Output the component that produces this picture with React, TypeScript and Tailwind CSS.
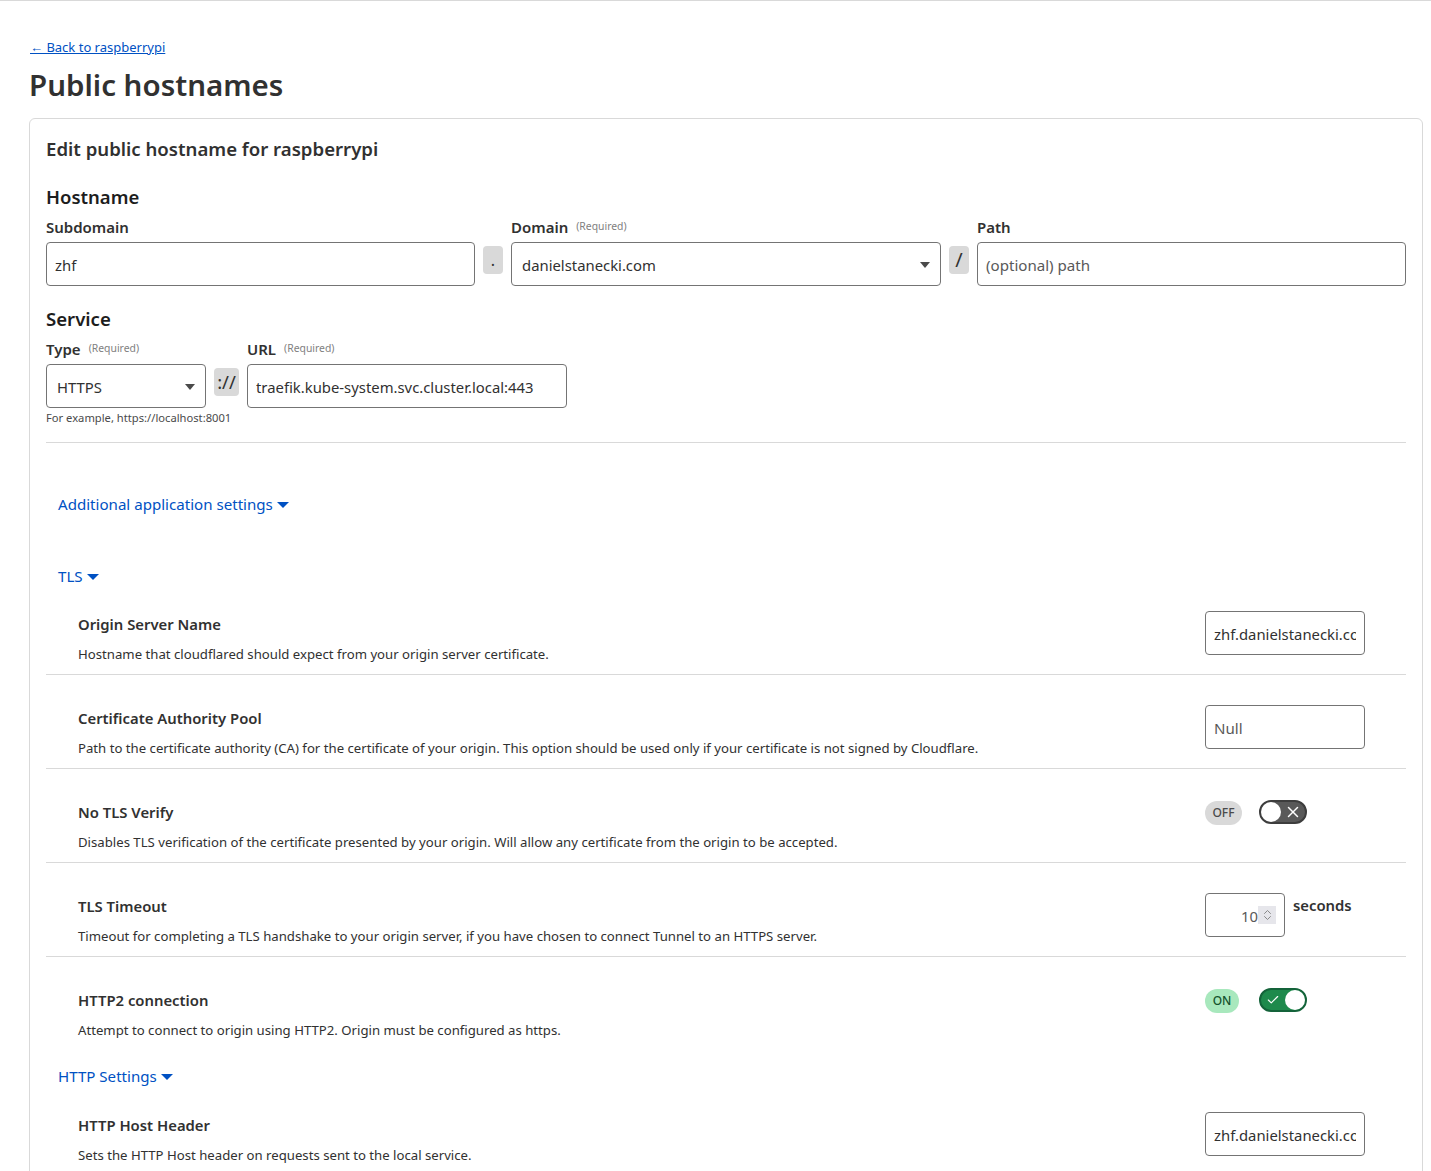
import React from 'react';
import { Check, ChevronDown, ChevronUp, X } from 'lucide-react';

const Caret = ({ className = 'border-x-[6px] border-t-[6px] border-t-[#0051c3]' }: { className?: string }) => (
  <span className={`inline-block w-0 h-0 border-x-transparent ${className}`} />
);

const Required = () => <span className="ml-2 text-[10.4px] font-normal leading-4 text-[#808080] -translate-y-px">(Required)</span>;

const Label = ({ text, required }: { text: string; required?: boolean }) => (
  <div className="flex items-center h-[20px] text-[15px] font-semibold text-[#313131]">
    {text}
    {required && <Required />}
  </div>
);

const Sep = ({ text, className = '' }: { text: string; className?: string }) => (
  <div className={`mt-[29px] h-[28px] rounded bg-[#d9d9d9] flex items-center justify-center text-[#313131] ${className}`}>
    {text}
  </div>
);

const Field = ({ value, placeholder, className = '' }: { value?: string; placeholder?: string; className?: string }) => (
  <input
    readOnly
    value={value}
    placeholder={placeholder}
    className={`block h-[44px] rounded border border-[#747474] bg-white px-2 pt-[2px] text-[14.85px] text-[#313131] placeholder:text-[15.1px] placeholder:text-[#595959] placeholder:opacity-100 outline-none ${className}`}
  />
);

const SelectBox = ({ value, className = '' }: { value: string; className?: string }) => (
  <div className={`h-[44px] rounded border border-[#747474] bg-white flex items-center justify-between pl-[10px] pr-[10px] text-[14.85px] text-[#313131] ${className}`}>
    <span className="translate-y-px">{value}</span>
    <span className="-translate-y-[2px]">
      <Caret className="border-x-[5px] border-t-[6px] border-t-[#4a4a4a]" />
    </span>
  </div>
);

const Section = ({ text, className = '' }: { text: string; className?: string }) => (
  <div className={`flex items-center gap-1 pl-3 text-[#0051c3] text-[15.1px] ${className}`}>
    {text}
    <span className="-translate-y-[2px]">
      <Caret />
    </span>
  </div>
);

const Row = ({ title, desc, last, children }: { title: string; desc: string; last?: boolean; children: React.ReactNode }) => (
  <div className={`flex h-[94px] pt-[30px] ${last ? '' : 'border-b border-[#d9d9d9]'}`}>
    <div className="flex-1 pl-8">
      <div className="h-[33px] pt-px leading-[24px] text-[14.85px] font-semibold text-[#313131]">{title}</div>
      <div className="text-[13.18px] leading-[20px] text-[#313131]">{desc}</div>
    </div>
    <div className="w-[201px] shrink-0">{children}</div>
  </div>
);

const Toggle = ({ on }: { on?: boolean }) => (
  <div className="flex items-center h-[24px] mt-[1px]">
    <span className={`h-[24px] rounded-full flex items-center justify-center translate-y-px text-[12px] font-medium ${on ? 'w-[34px] bg-[#a8e8bd] text-[#14532d]' : 'w-[37px] bg-[#d9d9d9] text-[#4a4a4a]'}`}>
      {on ? 'ON' : 'OFF'}
    </span>
    <div className={`h-[24px] w-[48px] rounded-full border-2 flex items-center ${on ? 'ml-[20px] bg-[#1e8a4c] border-[#14633a] justify-end' : 'ml-[17px] bg-[#595959] border-[#3d3d3d]'}`}>
      {on && <Check className="mr-[5px] text-white" size={14} strokeWidth={2} />}
      <span className="h-[20px] w-[20px] rounded-full bg-white" />
      {!on && <X className="ml-[3px] shrink-0 text-white" size={18} strokeWidth={2} />}
    </div>
  </div>
);

export default function App() {
  return (
    <div className="h-[1171px] overflow-hidden bg-white border-t border-[#d9d9d9] font-['Noto_Sans',sans-serif] text-[#313131]">
      <div className="pl-[29px] pr-2 pt-[37px]">
        <a className="block h-[18px] pl-px text-[13px] leading-[18px] text-[#0051c3] underline">
          <span className="font-['Liberation_Sans',sans-serif]">←</span> Back to raspberrypi
        </a>
        <h1 className="mt-[7px] text-[29.5px] leading-[44px] font-semibold text-[#313131]">Public hostnames</h1>
        <div className="mt-[11px] rounded-t-md border border-[#d9d9d9] px-4 pt-[16px] h-[1100px]">
          <h2 className="text-[18.6px] leading-[28px] font-semibold">Edit public hostname for raspberrypi</h2>
          <h3 className="mt-[21px] text-[18.5px] leading-[26px] font-semibold text-[#1d1d1d]">Hostname</h3>
          <div className="mt-[7px] flex">
            <div className="w-[429px]">
              <Label text="Subdomain" />
              <Field value="zhf" className="mt-[5px] w-full" />
            </div>
            <Sep text="." className="ml-2 w-[20px]" />
            <div className="ml-2 w-[430px]">
              <Label text="Domain" required />
              <SelectBox value="danielstanecki.com" className="mt-[5px]" />
            </div>
            <Sep text="/" className="ml-2 w-[20px] text-[20px]" />
            <div className="ml-2 flex-1">
              <Label text="Path" />
              <Field placeholder="(optional) path" className="mt-[5px] w-full" />
            </div>
          </div>
          <h3 className="mt-[20px] text-[18.6px] leading-[26px] font-semibold text-[#1d1d1d]">Service</h3>
          <div className="mt-[7px] flex">
            <div className="w-[160px]">
              <Label text="Type" required />
              <SelectBox value="HTTPS" className="mt-[5px]" />
            </div>
            <Sep text="://" className="ml-2 w-[25px] text-[18.5px]" />
            <div className="ml-2 w-[320px]">
              <Label text="URL" required />
              <Field value="traefik.kube-system.svc.cluster.local:443" className="mt-[5px] w-full" />
            </div>
          </div>
          <div className="mt-[2px] text-[11.2px] leading-[16px] text-[#4a4a4a]">For example, https://localhost:8001</div>
          <div className="mt-[16px] border-t border-[#d9d9d9]" />
          <Section text="Additional application settings" className="mt-[50px] h-[22px]" />
          <Section text="TLS" className="mt-[50px] h-[22px]" />
          <div className="-mt-[6px]">
            <Row title="Origin Server Name" desc="Hostname that cloudflared should expect from your origin server certificate.">
              <Field value="zhf.danielstanecki.com" className="w-[160px]" />
            </Row>
            <Row title="Certificate Authority Pool" desc="Path to the certificate authority (CA) for the certificate of your origin. This option should be used only if your certificate is not signed by Cloudflare.">
              <Field placeholder="Null" className="w-[160px]" />
            </Row>
            <Row title="No TLS Verify" desc="Disables TLS verification of the certificate presented by your origin. Will allow any certificate from the origin to be accepted.">
              <Toggle />
            </Row>
            <Row title="TLS Timeout" desc="Timeout for completing a TLS handshake to your origin server, if you have chosen to connect Tunnel to an HTTPS server.">
              <div className="flex items-start">
                <div className="h-[44px] w-[80px] rounded border border-[#747474] flex items-center justify-end pr-2 text-[14.85px] text-[#595959]">
                  <span className="translate-y-px">10</span>
                  <div className="h-[18px] w-[18px] bg-[#e6e6eb] flex flex-col items-center justify-center text-[#8a8a8a]">
                    <ChevronUp size={13} strokeWidth={2} className="-mb-[3px]" />
                    <ChevronDown size={13} strokeWidth={2} className="-mt-[3px]" />
                  </div>
                </div>
                <span className="ml-2 text-[14.85px] leading-[24px] font-semibold text-[#313131]">seconds</span>
              </div>
            </Row>
            <Row title="HTTP2 connection" desc="Attempt to connect to origin using HTTP2. Origin must be configured as https." last>
              <Toggle on />
            </Row>
          </div>
          <Section text="HTTP Settings" className="mt-[14px] h-[22px]" />
          <div className="-mt-[5px]">
            <Row title="HTTP Host Header" desc="Sets the HTTP Host header on requests sent to the local service." last>
              <Field value="zhf.danielstanecki.com" className="w-[160px]" />
            </Row>
          </div>
        </div>
      </div>
    </div>
  );
}
